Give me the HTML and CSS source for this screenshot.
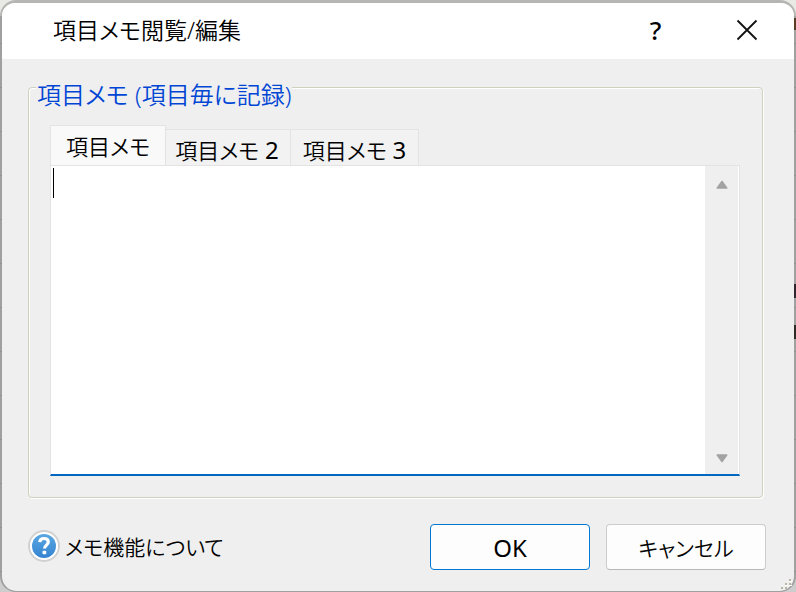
FILE: index.html
```html
<!DOCTYPE html>
<html lang="ja">
<head>
  <meta charset="UTF-8">
  <meta name="viewport" content="width=device-width, initial-scale=1.0">
  <title>項目メモ閲覧/編集</title>
  <link rel="stylesheet" href="styles.css">
</head>
<body>
  <form class="dialog">
    <header class="titlebar">
      <h1>項目メモ閲覧/編集</h1>
      <button type="button" class="caption-button help">?</button>
      <button type="button" class="caption-button" aria-label="閉じる">
        <svg width="22" height="22" viewBox="0 0 22 22"><path d="M1.5 1.5l19 19M20.5 1.5l-19 19" fill="none" stroke="#111" stroke-width="1.8"/></svg>
      </button>
    </header>

    <fieldset class="group">
      <legend>項目メモ (項目毎に記録)</legend>
      <div class="tabs" role="tablist">
        <button type="button" class="tab active" role="tab" aria-selected="true">項目メモ</button>
        <button type="button" class="tab" role="tab">項目メモ <span class="number">2</span></button>
        <button type="button" class="tab" role="tab">項目メモ <span class="number">3</span></button>
      </div>
      <div class="editor">
        <textarea aria-label="項目メモ"></textarea>
        <span class="caret"></span>
        <div class="scrollbar">
          <svg width="12" height="10" viewBox="0 0 12 10"><path d="M6 1.5L10.7 8H1.3z" fill="#a3a3a3" stroke="#a3a3a3" stroke-width="1.6" stroke-linejoin="round"/></svg>
          <svg width="12" height="10" viewBox="0 0 12 10"><path d="M6 8.5L1.3 2h9.4z" fill="#a3a3a3" stroke="#a3a3a3" stroke-width="1.6" stroke-linejoin="round"/></svg>
        </div>
      </div>
    </fieldset>

    <footer class="footer">
      <a href="#" class="help-link">
        <svg width="32" height="32" viewBox="0 0 32 32">
          <defs>
            <linearGradient id="ball" x1="0" y1="0" x2="0" y2="1">
              <stop offset="0" stop-color="#5aa7e2"/>
              <stop offset="1" stop-color="#3583d0"/>
            </linearGradient>
          </defs>
          <circle cx="16" cy="16" r="15" fill="#fff" stroke="#d0d0d0" stroke-width="1.8"/>
          <circle cx="16" cy="16" r="12" fill="url(#ball)"/>
          <path d="M11.7 12.2c.2-2.6 2-3.7 4.3-3.7 2.5 0 4.3 1.3 4.3 3.5 0 3-3.8 3.2-3.8 6.6" fill="none" stroke="#fff" stroke-width="3.2"/>
          <rect x="14.5" y="20.8" width="3.8" height="3.4" rx="1" fill="#fff"/>
        </svg>
        <span>メモ機能について</span>
      </a>
      <button type="submit" class="button default">OK</button>
      <button type="button" class="button">キャンセル</button>
    </footer>
    <svg class="grip" width="12" height="12" viewBox="0 0 12 12">
      <path d="M9 1h2v2H9zM5 5h2v2H5zM9 5h2v2H9zM1 9h2v2H1zM5 9h2v2H5z" fill="#b8b5a0"/>
      <path d="M11 3h1v1h-3V3zM7 7h1v1H5V7zM11 7h1v1H9V7z" fill="#fff"/>
    </svg>
  </form>
</body>
</html>
```

FILE: styles.css
```css
* {
  box-sizing: border-box;
}
body {
  margin: 0;
  font-family: "Noto Sans", "Noto Sans CJK JP", sans-serif;
  font-size: 24px;
  font-weight: 350;
  font-feature-settings: "palt";
  color: #000;
  /* edge of the sheet behind the dialog */
  background:
    linear-gradient(#40303c, #40303c) right 0 top 284px / 2px 14px no-repeat,
    linear-gradient(#403830, #403830) right 0 top 325px / 2px 14px no-repeat,
    linear-gradient(#705030, #705030) right 0 top 18px / 2px 12px no-repeat,
    linear-gradient(#e9e9e6, #e9e9e6) 0 0 / 100% 16px no-repeat,
    repeating-linear-gradient(#cdcdcd 0 43px, #bcbcbc 43px 44px);
}
.dialog {
  position: relative;
  display: flex;
  flex-direction: column;
  min-height: 100vh;
  border: 2px solid rgba(0, 0, 0, .22);
  border-top-width: 3px;
  border-bottom-width: 1px;
  border-radius: 16px;
  background-color: #efefef;
  background-clip: padding-box;
}
button {
  font: inherit;
  font-feature-settings: inherit;
  color: inherit;
}

.titlebar {
  display: flex;
  align-items: center;
  height: 56px;
  padding: 0 2px 0 51px;
  border-radius: 13px 13px 0 0;
  background-color: #fff;
}
.titlebar h1 {
  flex: 1;
  margin: 0;
  padding-bottom: 4px;
  font-size: 23px;
  font-weight: 350;
}
.caption-button {
  display: flex;
  align-items: center;
  justify-content: center;
  width: 91px;
  height: 56px;
  padding: 0 0 2px;
  border: none;
  background: none;
}
.help {
  font-size: 26px;
  font-weight: 500;
}

.group {
  display: flow-root;
  flex: 1;
  min-width: 0;
  margin: 28px 31px 0 26px;
  padding: 0 22px 21px 21px;
  border: 1px solid #d0d0bf;
  border-radius: 4px;
  box-shadow: inset 1px 1px #fff, 1px 1px #fff;
}
.group legend {
  float: left;
  margin: -10px 0 13px -14px;
  padding: 0 1px;
  line-height: 34px;
  color: #0046d5;
  background-color: #efefef;
}
.tabs {
  display: flex;
  align-items: flex-end;
  clear: both;
  height: 40px;
  font-size: 22px;
}
.tab {
  height: 36px;
  padding: 5px 11px 0 9px;
  border: 1px solid #e3e3e3;
  border-width: 1px 1px 0 0;
  background-color: #f2f2f2;
  line-height: 30px;
}
.tab + .tab + .tab {
  padding: 5px 12px 0;
}
.tab.active {
  height: 40px;
  padding: 0 15px;
  border-left-width: 1px;
  background-color: #f9f9f9;
}
.number {
  font-size: 24px;
  font-weight: 400;
}

.editor {
  position: relative;
  display: flex;
  height: 311px;
  padding-right: 1px;
  border: 1px solid #e3e3e3;
  border-bottom: 2px solid #0067c0;
  background-color: #fff;
}
.editor textarea {
  flex: 1;
  min-width: 0;
  padding: 2px;
  border: none;
  outline: none;
  resize: none;
  background: none;
  font: inherit;
}
.caret {
  position: absolute;
  top: 2px;
  left: 2px;
  width: 1px;
  height: 30px;
  background-color: #000;
}
.scrollbar {
  display: flex;
  flex-direction: column;
  align-items: center;
  justify-content: space-between;
  width: 33px;
  padding: 14px 0 11px;
  background-color: #efefef;
}

.footer {
  display: flex;
  align-items: center;
  gap: 16px;
  padding: 26px 28px 21px 26px;
}
.help-link {
  display: flex;
  align-items: center;
  gap: 5px;
  margin-right: auto;
  padding-bottom: 2px;
  font-size: 21px;
  color: inherit;
  text-decoration: none;
}
.help-link svg {
  flex: none;
}
.button {
  width: 160px;
  height: 46px;
  padding: 0;
  border: 1px solid #ccc;
  border-bottom-color: #b8b8b8;
  border-radius: 4px;
  background-color: #fdfdfd;
  font-size: 21px;
}
.button.default {
  border-color: #0078d4;
  font-size: 24px;
  font-weight: 400;
}

.grip {
  position: absolute;
  right: 2px;
  bottom: 1px;
}
```
